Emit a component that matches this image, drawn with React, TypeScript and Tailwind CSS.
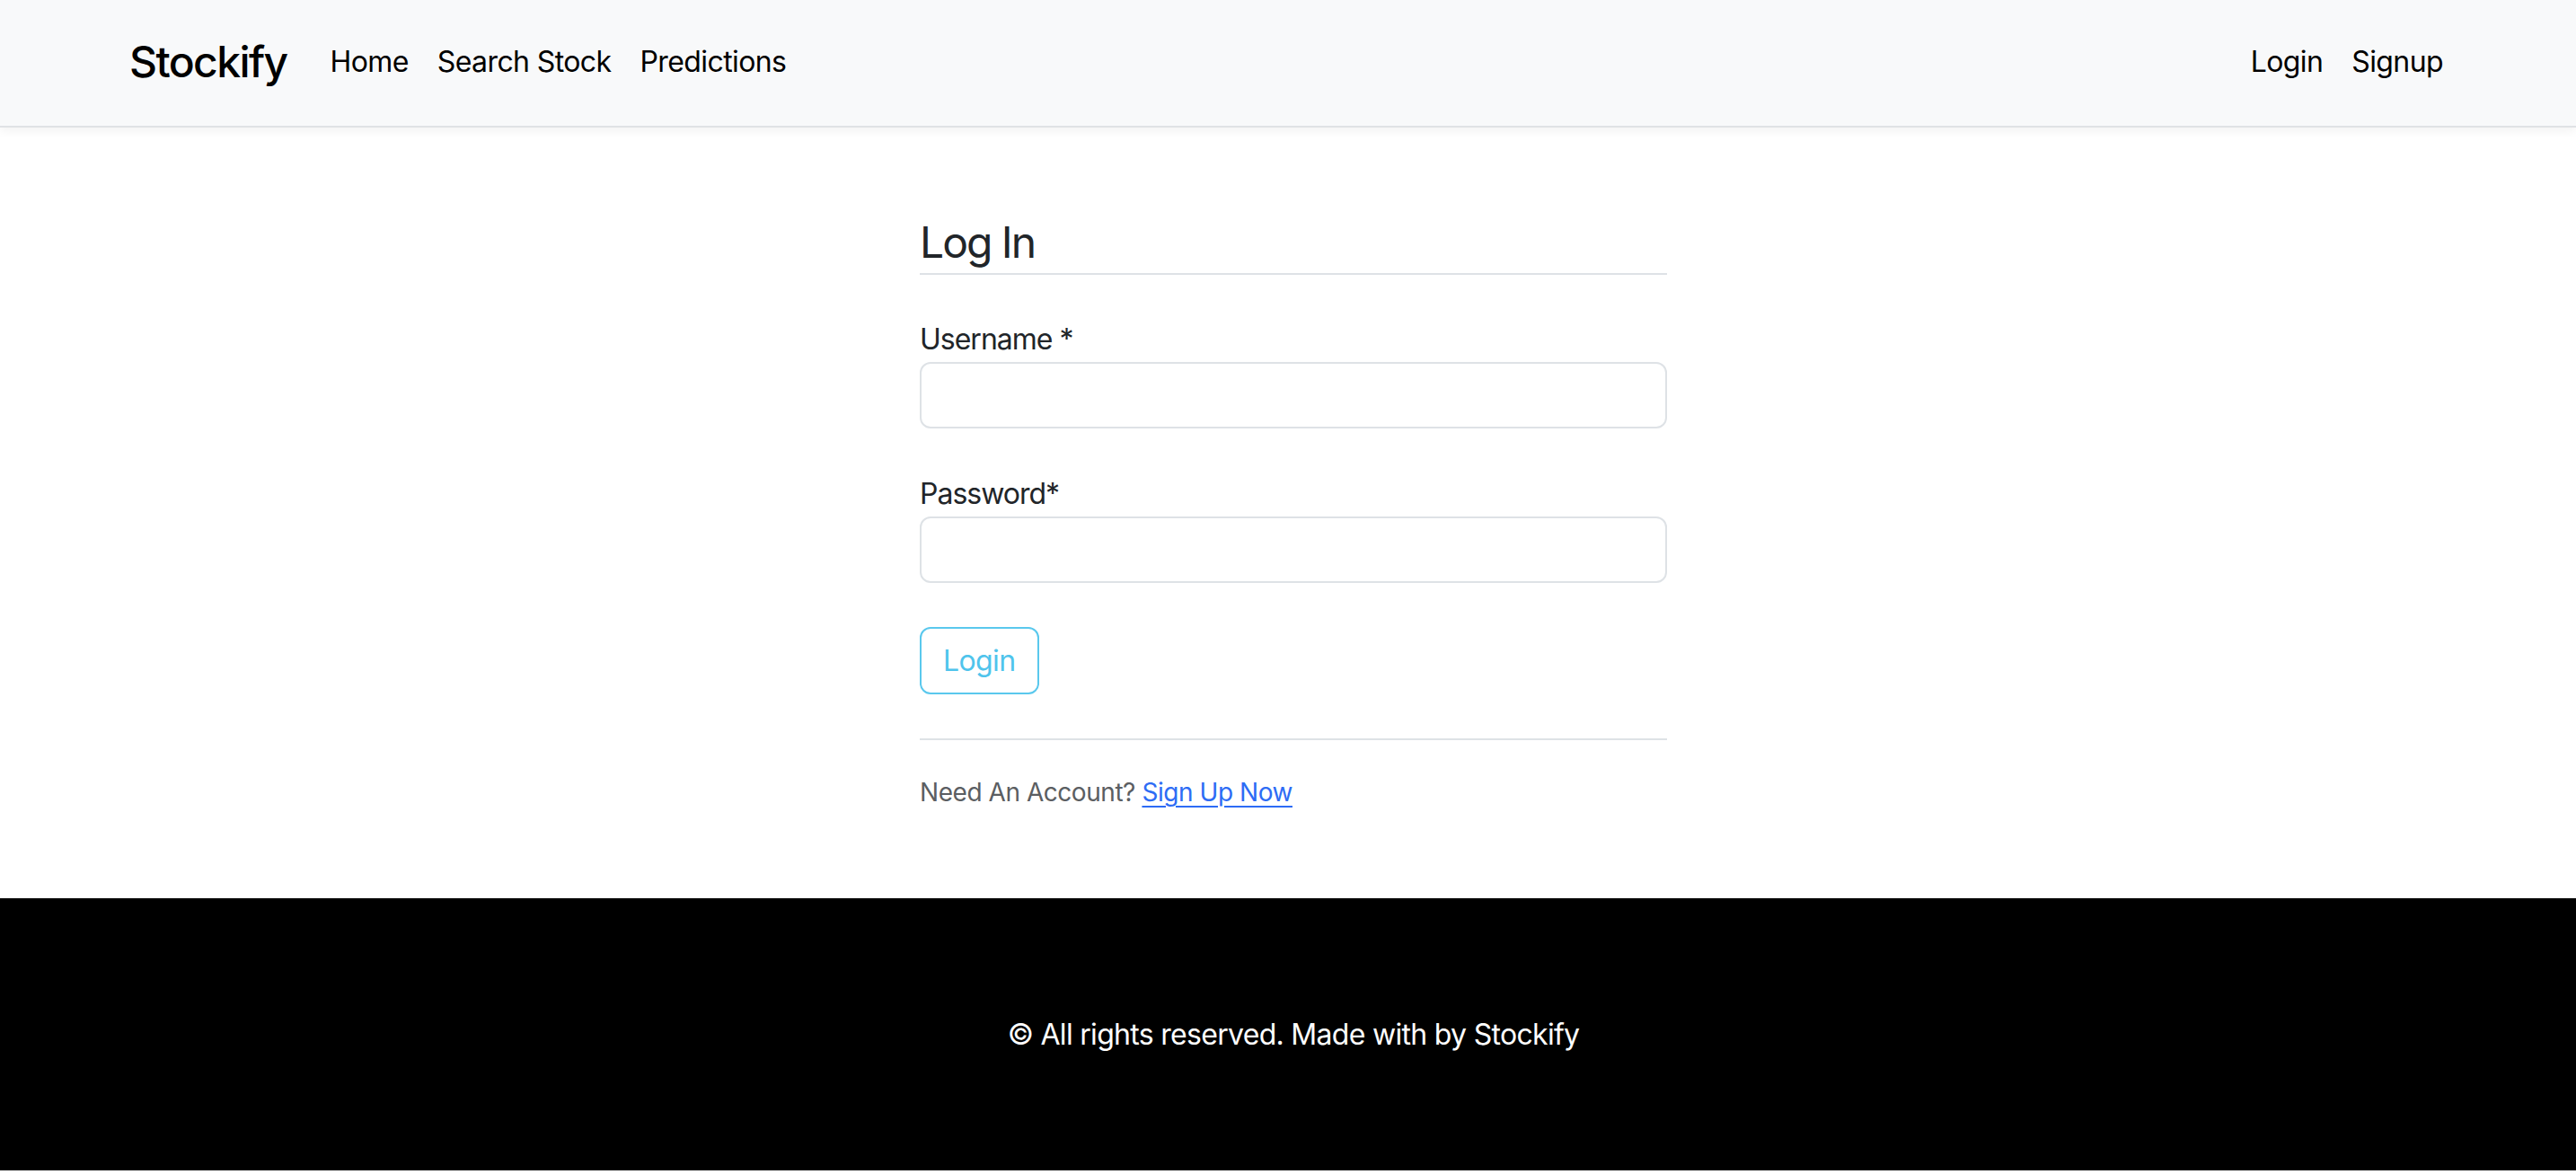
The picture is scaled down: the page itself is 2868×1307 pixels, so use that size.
import React from 'react';

const navLinks = ['Home', 'Search Stock', 'Predictions'];

export const Navbar: React.FC = () => (
  <nav className="h-[142px] bg-[#f8f9fa] border-b-2 border-[#e0e2e5] shadow-[0_4px_10px_rgba(0,0,0,0.05)] relative z-10">
    <div className="ml-[144px] w-[2592px] h-full flex items-center justify-between pb-[3px]">
      <div className="flex items-center">
        <a className="text-[48px] leading-[72px] font-medium text-black mr-[32px] tracking-[-1.6px]">Stockify</a>
        {navLinks.map((link) => (
          <a key={link} className="px-[16px] text-[32px] leading-[48px] text-black tracking-[-0.6px]">
            {link}
          </a>
        ))}
      </div>
      <div className="flex items-center">
        <a className="px-[16px] text-[32px] leading-[48px] text-black tracking-[-0.6px]">Login</a>
        <a className="px-[16px] text-[32px] leading-[48px] text-black tracking-[-0.6px]">Signup</a>
      </div>
    </div>
  </nav>
);

const Field: React.FC<{ label: string; type: string; first?: boolean }> = ({ label, type, first }) => (
  <div className={first ? 'mt-[48px]' : 'mt-[49px]'}>
    <label className="block text-[32px] leading-[48px] text-[#212529] tracking-[-1px]">{label}</label>
    <input
      type={type}
      className="block w-full mt-[1px] h-[74px] rounded-[12px] border-2 border-[#dee2e6] bg-white px-[24px] text-[32px] outline-none"
    />
  </div>
);

export const LoginForm: React.FC = () => (
  <main className="h-[858px] pt-[99px]">
    <div className="ml-[144px] w-[2592px] grid grid-cols-3 gap-[48px]">
      <div className="col-start-2">
        {/* Heading */}
        <h4 className="text-[48px] leading-[58px] text-[#212529] pb-[5px] border-b-2 border-[#dee2e6] tracking-[-2px]">
          Log In
        </h4>

        <Field label="Username *" type="text" first />
        <Field label="Password*" type="password" />

        <button className="mt-[49px] h-[75px] px-[24px] rounded-[12px] border-2 border-[#5ac8ed] text-[#4fc4ec] text-[32px] leading-[48px] bg-white tracking-[-0.6px]">
          Login
        </button>

        <hr className="mt-[49px] border-0 border-t-2 border-[#dee2e6]" />

        <p className="mt-[37px] text-[28px] leading-[42px] text-[#5b5e62] tracking-[-0.45px]">
          Need An Account?{' '}
          <a className="text-[#2d6cf5] underline underline-offset-[5px] decoration-2">Sign Up Now</a>
        </p>
      </div>
    </div>
  </main>
);

export const Footer: React.FC = () => (
  <footer className="h-[303px] bg-black flex items-center justify-center pl-[12px]">
    <p className="text-white text-[32px] leading-[48px] tracking-[-0.7px]">
      © All rights reserved. Made with by Stockify
    </p>
  </footer>
);

const App: React.FC = () => (
  <div className="min-h-screen bg-white font-['Inter',sans-serif] antialiased">
    <Navbar />
    <LoginForm />
    <Footer />
  </div>
);

export default App;
